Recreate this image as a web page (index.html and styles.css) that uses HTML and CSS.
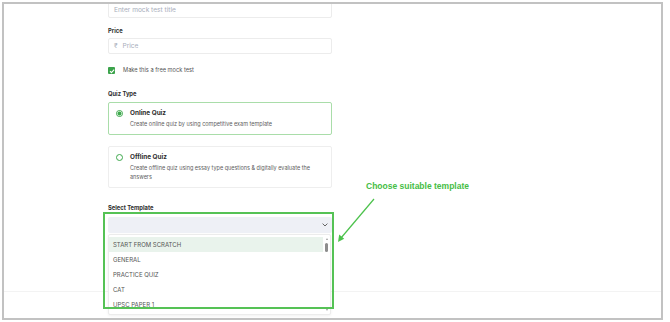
FILE: index.html
```html
<!DOCTYPE html>
<html lang="en">
  <head>
    <meta charset="UTF-8" />
    <meta name="viewport" content="width=device-width, initial-scale=1.0" />
    <title>Create mock test</title>
    <link rel="stylesheet" href="styles.css">
  </head>
  <body>
    <main class="frame">
      <form class="form">
        <div class="field first">
          <span class="placeholder">Enter mock test title</span>
        </div>

        <p class="label">Price</p>
        <div class="field">
          <span class="placeholder"><span class="rupee">₹</span> Price</span>
        </div>

        <div class="check">
          <span class="box">
            <svg viewBox="0 0 8 8" width="8" height="8" aria-hidden="true">
              <path d="M2 4.2l1.4 1.4L6.2 2.7" fill="none" stroke="#fff" stroke-width="1.1" />
            </svg>
          </span>
          <span>Make this a free mock test</span>
        </div>

        <p class="label">Quiz Type</p>
        <div class="card active">
          <span class="radio checked"></span>
          <div>
            <p class="card-title">Online Quiz</p>
            <p class="card-desc">Create online quiz by using competitive exam template</p>
          </div>
        </div>
        <div class="card">
          <span class="radio"></span>
          <div>
            <p class="card-title">Offline Quiz</p>
            <p class="card-desc">
              Create offline quiz using essay type questions &amp; digitally evaluate the answers
            </p>
          </div>
        </div>

        <p class="label">Select Template</p>
        <div class="template">
          <div class="select">
            <svg viewBox="0 0 6 4" width="6" height="4" aria-hidden="true">
              <path d="M0.6 0.6L3 3l2.4-2.4" fill="none" stroke="#555" stroke-width="0.9" />
            </svg>
          </div>

          <ul class="options">
            <li class="current">START FROM SCRATCH</li>
            <li>GENERAL</li>
            <li>PRACTICE QUIZ</li>
            <li>CAT</li>
            <li>UPSC PAPER 1</li>
            <span class="scroll">
              <span class="arrow up"></span>
              <span class="thumb"></span>
              <span class="arrow down"></span>
            </span>
          </ul>
        </div>
      </form>

      <div class="footer"></div>

      <!-- annotation -->
      <div class="highlight"></div>
      <p class="note">Choose suitable template</p>
      <svg class="pointer" viewBox="0 0 40 46" width="40" height="46" aria-hidden="true">
        <line x1="37" y1="2" x2="4" y2="41" stroke="#4cc24c" stroke-width="1.2" />
        <path d="M1 45l1.2-7.5 5 4.2z" fill="#4cc24c" />
      </svg>
    </main>
  </body>
</html>
```

FILE: styles.css
```css
* {
  margin: 0;
  padding: 0;
  box-sizing: border-box;
}
body {
  background: #fff;
  color: #333;
  font: 400 6px/8px "Inter", "Noto Sans", sans-serif;
}

.frame {
  position: relative;
  width: 661px;
  height: 318px;
  margin: 2px 0 0 2px;
  overflow: hidden;
  border: 2px solid #c2c2c2;
  background: #fff;
}

.form {
  width: 224px;
  margin-left: 104px;
}

.field {
  height: 16px;
  display: flex;
  align-items: center;
  padding: 0 5px;
  border: 1px solid #ececec;
  border-radius: 2px;
}
.field.first {
  margin-top: -2px;
}
.placeholder {
  color: #a9aebb;
  font-size: 6.6px;
}
.rupee {
  margin-right: 3px;
}

.label {
  font-weight: 700;
  font-size: 5.8px;
  color: #2f2f2f;
  margin: 9px 0 3px;
}

.check {
  gap: 8px;
  display: flex;
  align-items: center;
  height: 8px;
  margin: 12px 0 16px;
  font-size: 5.7px;
  color: #555;
}
.check + .label {
  margin-top: 0;
  margin-bottom: 4px;
}
.box {
  width: 7px;
  height: 7px;
  display: grid;
  place-items: center;
  border-radius: 1px;
  background: #3ba34b;
}

.card {
  gap: 7px;
  display: flex;
  align-items: flex-start;
  padding: 6px 7px 5px;
  border: 1px solid #eeeeee;
  border-radius: 2px;
}
.card.active {
  padding-bottom: 6px;
  border-color: #a9dda9;
  margin-bottom: 11px;
}
.radio {
  width: 7px;
  height: 7px;
  flex: none;
  margin-top: 0.5px;
  border-radius: 50%;
  border: 1px solid #3ea94d;
}
.radio.checked {
  background: radial-gradient(circle, #3ea94d 0 1.8px, #fff 2.2px);
}
.card-title {
  font-weight: 700;
  font-size: 6.4px;
  color: #2d2d2d;
}
.card-desc {
  margin-top: 3px;
  font-size: 5.5px;
  line-height: 9px;
  color: #5d5d5d;
}
.active .card-desc {
  line-height: 8px;
}

.card + .label {
  margin-top: 16px;
  margin-bottom: 5px;
}

.template {
  position: relative;
}
.select {
  height: 16px;
  display: flex;
  align-items: center;
  justify-content: flex-end;
  padding-right: 4px;
  border-radius: 2px;
  background: #eef0f6;
}

.options {
  position: absolute;
  top: 17px;
  left: 0;
  width: 223px;
  height: 81px;
  padding: 2px 7px 0 0;
  overflow: hidden;
  list-style: none;
  background: #fff;
  border: 1px solid #ececec;
  border-radius: 2px;
  box-shadow: 0 1px 3px rgb(0 0 0 / 6%);
}
.options li {
  height: 15px;
  display: flex;
  align-items: center;
  padding-left: 4px;
  font-size: 6px;
  color: #555;
}
.options li.current {
  background: #e9f3ec;
}
.scroll {
  position: absolute;
  top: 2px;
  right: 1px;
  bottom: 2px;
  width: 5px;
  display: flex;
  flex-direction: column;
  align-items: center;
}
.arrow {
  width: 0;
  height: 0;
  border-left: 1.5px solid transparent;
  border-right: 1.5px solid transparent;
}
.arrow.up {
  margin-top: 1px;
  border-bottom: 2px solid #9a9a9a;
}
.arrow.down {
  margin-top: auto;
  margin-bottom: 1px;
  border-top: 2px solid #9a9a9a;
}
.thumb {
  width: 3px;
  height: 9px;
  margin-top: 3px;
  border-radius: 2px;
  background: #8d8d8d;
}

.footer {
  margin-top: 58px;
  border-top: 1px solid #f3f3f3;
}

/* annotation layer */
.highlight {
  position: absolute;
  top: 208px;
  left: 99px;
  width: 231px;
  height: 97px;
  border: 2px solid #55c255;
}
.note {
  position: absolute;
  top: 177px;
  left: 362px;
  color: #45bd45;
  font: 700 8.5px/10px "Liberation Sans", Arial, sans-serif;
}
.pointer {
  position: absolute;
  top: 193px;
  left: 333px;
}
```
